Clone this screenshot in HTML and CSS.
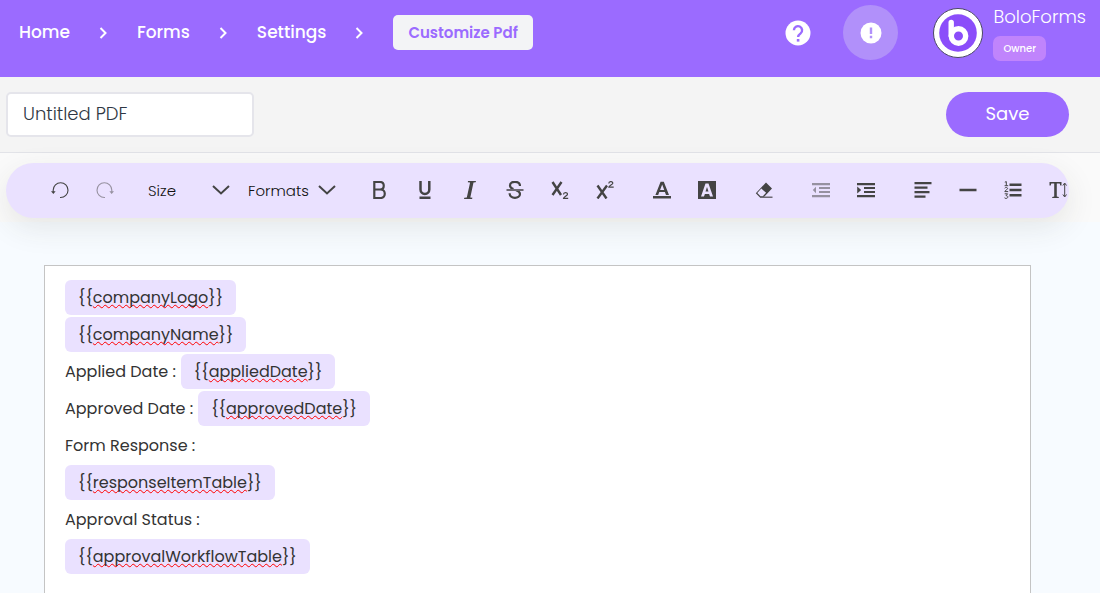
FILE: index.html
```html
<!DOCTYPE html>
<html lang="en">
<head>
<meta charset="utf-8">
<title>Customize Pdf</title>
<link rel="stylesheet" href="styles.css">
</head>
<body>
<header class="topbar">
  <nav class="crumbs" aria-label="Breadcrumb">
    <a href="#">Home</a>
    <svg class="crumb-arrow" viewBox="0 0 8 12"><path d="M1 1l5 5-5 5"/></svg>
    <a href="#">Forms</a>
    <svg class="crumb-arrow" viewBox="0 0 8 12"><path d="M1 1l5 5-5 5"/></svg>
    <a href="#">Settings</a>
    <svg class="crumb-arrow" viewBox="0 0 8 12"><path d="M1 1l5 5-5 5"/></svg>
    <a href="#" class="crumb-current" aria-current="page">Customize Pdf</a>
  </nav>
  <div class="account">
    <button class="help" type="button" aria-label="Help">
      <svg width="26" height="26" viewBox="0 0 26 26"><circle cx="13" cy="13" r="12.500" fill="#fff"/><path d="M8.900 10.200a4.100 4.100 0 1 1 6.700 3.200c-1.500 1.100-2.500 1.900-2.500 3.600" fill="none" stroke="#9b6bff" stroke-width="2.400"/><rect x="11.800" y="19" width="2.600" height="2.600" fill="#9b6bff"/></svg>
    </button>
    <button class="notice" type="button" aria-label="Notices">
      <svg width="22" height="22" viewBox="0 0 22 22"><circle cx="11" cy="11" r="10.500" fill="#fff"/><path d="M11 5.500v6.500M11 13.800v2.400" stroke="#b190fa" stroke-width="2.400"/></svg>
    </button>
    <svg class="avatar" viewBox="0 0 50 50" role="img" aria-label="BoloForms logo"><circle cx="25" cy="25" r="24.500" fill="#fff" stroke="#4b4765"/><circle cx="25" cy="25" r="18.800" fill="#8b4dfa"/><path d="M18.200 14.500v13" fill="none" stroke="#fff" stroke-width="5.400" stroke-linecap="round"/><circle cx="25.500" cy="28" r="7.200" fill="none" stroke="#fff" stroke-width="5.400"/></svg>
    <div class="who"><span class="who-name">BoloForms</span><span class="role">Owner</span></div>
  </div>
</header>

<div class="titlebar">
  <input class="title-input" type="text" value="Untitled PDF" aria-label="PDF title">
  <button class="save" type="button">Save</button>
</div>

<div class="tool-strip">
<div class="toolbar" role="toolbar" aria-label="Formatting">
  <div class="group">
    <button type="button" aria-label="Undo"><svg viewBox="0 0 18 18"><path d="M2.200 11V9a7.400 7.400 0 1 1 7.400 7.500H9" fill="none" stroke="#444" stroke-width="1.100"/><path d="M0 10.300h4.600L2.400 13z"/></svg></button>
    <button type="button" disabled aria-label="Redo"><svg viewBox="0 0 18 18"><path d="M15.800 11V9a7.400 7.400 0 1 0-7.400 7.500H9" fill="none" stroke="#444" stroke-width="1.100"/><path d="M18 10.300h-4.600L15.600 13z"/></svg></button>
  </div>
  <div class="group">
    <div class="pick pick-size"><select aria-label="Size"><option>Size</option></select><svg viewBox="0 0 18 10"><path d="M1 1l8 7.500L17 1"/></svg></div>
    <div class="pick pick-format"><select aria-label="Formats"><option>Formats</option></select><svg viewBox="0 0 18 10"><path d="M1 1l8 7.500L17 1"/></svg></div>
  </div>
  <div class="group">
    <button type="button" aria-label="Bold"><svg viewBox="0 0 18 18"><path d="M3.300 1H9c5 0 5 7.500 0 7.500H3.300zM3.300 8.500h6.200c5.700 0 5.700 8.500 0 8.500H3.300z" fill="none" stroke="#444" stroke-width="2.200"/></svg></button>
    <button type="button" aria-label="Underline"><svg viewBox="0 0 18 18"><path d="M4.500 0v8.500a4.400 4.400 0 0 0 8.800 0V0" fill="none" stroke="#444" stroke-width="2.500"/><path d="M3.500 15.500h11V18h-11z"/></svg></button>
    <button type="button" aria-label="Italic"><svg viewBox="0 0 18 18"><path d="M7 0h8l-.3 1.200-2.200.4-3.200 14.800 2.200.4L11 18H3l.3-1.200 2.500-.4L9.100 1.600 6.800 1.200z"/></svg></button>
    <button type="button" aria-label="Strikethrough"><svg viewBox="0 0 18 18"><path d="M14 5c0-5.500-10-5.500-10-.6 0 2 1.500 3 3.500 3.600M10 9.200c2.500.7 4 1.700 4 3.800 0 5.200-10.400 5.300-10.400-.8" fill="none" stroke="#444" stroke-width="2.200"/><path d="M.5 8h17v2H.5z" fill="#6d6973"/></svg></button>
    <button type="button" aria-label="Subscript"><svg viewBox="0 0 18 18"><path d="M1.500 1l8.500 13M10.500 1L1.500 14" fill="none" stroke="#444" stroke-width="2.400"/><path d="M12.500 13.500c0-2.500 4-2.500 4-.3 0 1.500-4 2.500-4 4.200h4.700" fill="none" stroke="#444" stroke-width="1.200"/></svg></button>
    <button type="button" aria-label="Superscript"><svg viewBox="0 0 18 18"><path d="M1.500 4.500l9 13M11 4.500l-9.500 13" fill="none" stroke="#444" stroke-width="2.400"/><path d="M12.800 2.500c0-2.500 4-2.500 4-.3 0 1.500-4 2.200-4 4h4.900" fill="none" stroke="#444" stroke-width="1.200"/></svg></button>
  </div>
  <div class="group">
    <button type="button" aria-label="Text colour"><svg viewBox="0 0 18 18"><path d="M7.600.8h3.200L16 14h-3l-1.100-3H6.300l-1.100 3H2.400zM9.200 3.600L7.100 8.900h4.100z" fill-rule="evenodd"/><path d="M0 15h18v2.500H0z"/></svg></button>
    <button type="button" aria-label="Highlight colour"><svg viewBox="0 0 18 18"><path fill-rule="evenodd" d="M0 0h18v18H0zM7.500 2.500L3 15.500h3l.9-2.600h4.200l.9 2.600h3l-4.500-13zM9 6l1.500 4.600h-3z"/></svg></button>
  </div>
  <div class="group">
    <button type="button" aria-label="Remove format"><svg viewBox="0 0 18 18"><path fill-rule="evenodd" d="M11 1.500l6 6-8.500 9H5L.8 12.300zM6.300 7.600l-4 4.500 3.200 3.200h2.300l3.300-3.600z"/><path d="M5 15.500h12.500V17H5z" fill="#6d6973"/></svg></button>
  </div>
  <div class="group">
    <button type="button" disabled aria-label="Outdent"><svg viewBox="0 0 18 18"><path d="M0 2h18v2.200H0zM7 6h11v2H7zM7 10h11v2H7zM0 14h18v2.200H0zM4 5.800v6.400L.8 9z"/></svg></button>
    <button type="button" aria-label="Indent"><svg viewBox="0 0 18 18"><path d="M0 2h18v2.200H0zM7 6h11v2H7zM7 10h11v2H7zM0 14h18v2.200H0zM.2 5.500v7L4.200 9z"/></svg></button>
  </div>
  <div class="group">
    <button type="button" aria-label="Align"><svg viewBox="0 0 18 18"><path d="M.5 1h17v2.200H.5zM.5 5.500h13v2.200H.5zM.5 10h15v2.200H.5zM.5 14.500h11v2.200H.5z"/></svg></button>
    <button type="button" aria-label="Horizontal line"><svg viewBox="0 0 18 18"><path d="M.5 7.800h17v2.500H.5z"/></svg></button>
    <button type="button" aria-label="List"><svg viewBox="0 0 18 18"><path d="M5.500 2.500h12v2.400h-12zM5.500 7.800h12v2.400h-12zM5.500 13.100h12v2.400h-12z"/><path d="M.8 1.200L2.300.6v4M.6 4.700h3.600M.7 7.200c.5-1 2.900-1 2.900.4 0 1-2.600 1.600-2.800 3h3.400M.7 12.800h2.900L2 14.700c2.600-.1 2.300 2.700 0 2.700-.7 0-1.200-.2-1.500-.6" fill="none" stroke="#444"/></svg></button>
    <button type="button" aria-label="Line height"><svg viewBox="0 0 18 18"><path d="M.5 1h12v3.500h-1.200l-.6-2H7.800v13l2 .5v1H3.200v-1l2-.5v-13H2.300l-.6 2H.5z"/><path d="M15.700 3v12M13.900 4.500L15.700 2l1.800 2.500M13.900 13.500l1.800 2.500 1.800-2.500" fill="none" stroke="#444"/></svg></button>
  </div>
</div>
</div>

<main class="workspace">
  <div class="paper" contenteditable="true" spellcheck="false">
    <p><span class="chip">{{<span class="misspelt">companyLogo</span>}}</span></p>
    <p><span class="chip">{{<span class="misspelt">companyName</span>}}</span></p>
    <p>Applied Date : <span class="chip">{{<span class="misspelt">appliedDate</span>}}</span></p>
    <p>Approved Date : <span class="chip">{{<span class="misspelt">approvedDate</span>}}</span></p>
    <p>Form Response :</p>
    <p><span class="chip">{{<span class="misspelt">responseItemTable</span>}}</span></p>
    <p>Approval Status :</p>
    <p><span class="chip">{{<span class="misspelt">approvalWorkflowTable</span>}}</span></p>
  </div>
</main>
</body>
</html>
```
FILE: styles.css
```css
* { box-sizing: border-box; }

body {
  margin: 0;
  min-height: 100vh;
  display: flex;
  flex-direction: column;
  background: #f7fbff;
  color: #333;
  font-family: Poppins, Inter, "Open Sans", sans-serif;
}

button, input, select { font: inherit; color: inherit; }
button { padding: 0; border: 0; background: none; cursor: pointer; }

.topbar {
  display: flex;
  justify-content: space-between;
  padding: 5px 14px 17px 19px;
  background: #9b6bff;
  color: #fff;
}

.crumbs {
  display: flex;
  align-items: center;
  gap: 29px;
  height: 55px;
  font-size: 17px;
  font-weight: 500;
}
.crumbs a { padding-bottom: 2px; color: #fff; text-decoration: none; }
.crumb-arrow { width: 9px; height: 12px; fill: none; stroke: #fff; stroke-width: 2; }
.crumbs .crumb-current {
  padding: 0 15px;
  border-radius: 5px;
  background: #f3f4f6;
  color: #9b6bff;
  font-size: 15px;
  font-weight: 600;
  line-height: 35px;
}

.account { display: flex; align-items: center; height: 55px; }
.account svg { display: block; }
.help { margin-right: 32px; }
.notice {
  display: grid;
  place-items: center;
  width: 55px;
  height: 55px;
  margin-right: 35px;
  border-radius: 50%;
  background: #b190fa;
}
.avatar { width: 50px; height: 50px; margin-right: 10px; }
.who { display: flex; flex-direction: column; align-items: flex-start; gap: 7px; }
.who-name { font-size: 18px; font-weight: 300; line-height: 24px; }
.role {
  padding: 0 10px;
  border-radius: 7px;
  background: #c084fc;
  font-size: 10px;
  font-weight: 500;
  line-height: 25px;
}

.titlebar {
  display: flex;
  justify-content: space-between;
  padding: 15px 31px 15px 6px;
  border-bottom: 1px solid #e2e3e8;
  background: #f4f4f4;
}
.title-input {
  width: 248px;
  height: 45px;
  padding: 0 15px 2px;
  border: 2px solid #e5e5eb;
  border-radius: 5px;
  background: #fff;
  color: #2f3744;
  font-size: 18px;
  font-weight: 300;
}
.save {
  width: 123px;
  height: 45px;
  padding-bottom: 2px;
  border-radius: 23px;
  background: #9b6bff;
  color: #fff;
  font-size: 18px;
}

.tool-strip { padding: 10px 31px 4px 6px; background: #fafafa; }
.toolbar {
  display: flex;
  gap: 12px;
  height: 55px;
  padding: 0 0 1px 31px;
  border-radius: 28px;
  overflow: hidden;
  background: #eae1ff;
  box-shadow: 0 10px 30px rgba(60, 60, 40, 0.1);
}
.group { display: flex; align-items: center; flex: none; }
.group button { display: grid; place-items: center; width: 45px; height: 46px; }
.group button svg { width: 18px; height: 18px; fill: #444; }
.group button:disabled { opacity: 0.5; }

.pick { display: grid; align-items: center; padding: 0 9px; }
.pick select {
  grid-area: 1 / 1;
  width: 100%;
  height: 36px;
  padding: 0;
  border: 0;
  appearance: none;
  background: none;
  color: #111;
  font-size: 15px;
  font-weight: 300;
}
.pick svg {
  grid-area: 1 / 1;
  justify-self: end;
  width: 18px;
  height: 10px;
  fill: none;
  stroke: #444;
  stroke-width: 2;
  pointer-events: none;
}
.pick-size { width: 100px; }
.pick-format { width: 106px; }

.workspace { display: flex; flex: 1; padding: 43px 69px 0 44px; }
.paper {
  flex: 1;
  padding: 13px 20px;
  border: 1px solid #c4c4c4;
  border-bottom: 0;
  background: #fff;
  font-size: 16px;
  line-height: 35px;
  outline: none;
}
.paper p { display: flex; align-items: center; gap: 5px; height: 37px; margin: 0; }
.chip {
  padding: 0 13px;
  border-radius: 6px;
  background: #eae1ff;
}
.misspelt {
  text-decoration: underline wavy #f00 1px;
  text-decoration-skip-ink: none;
  text-underline-offset: 1px;
}
```
